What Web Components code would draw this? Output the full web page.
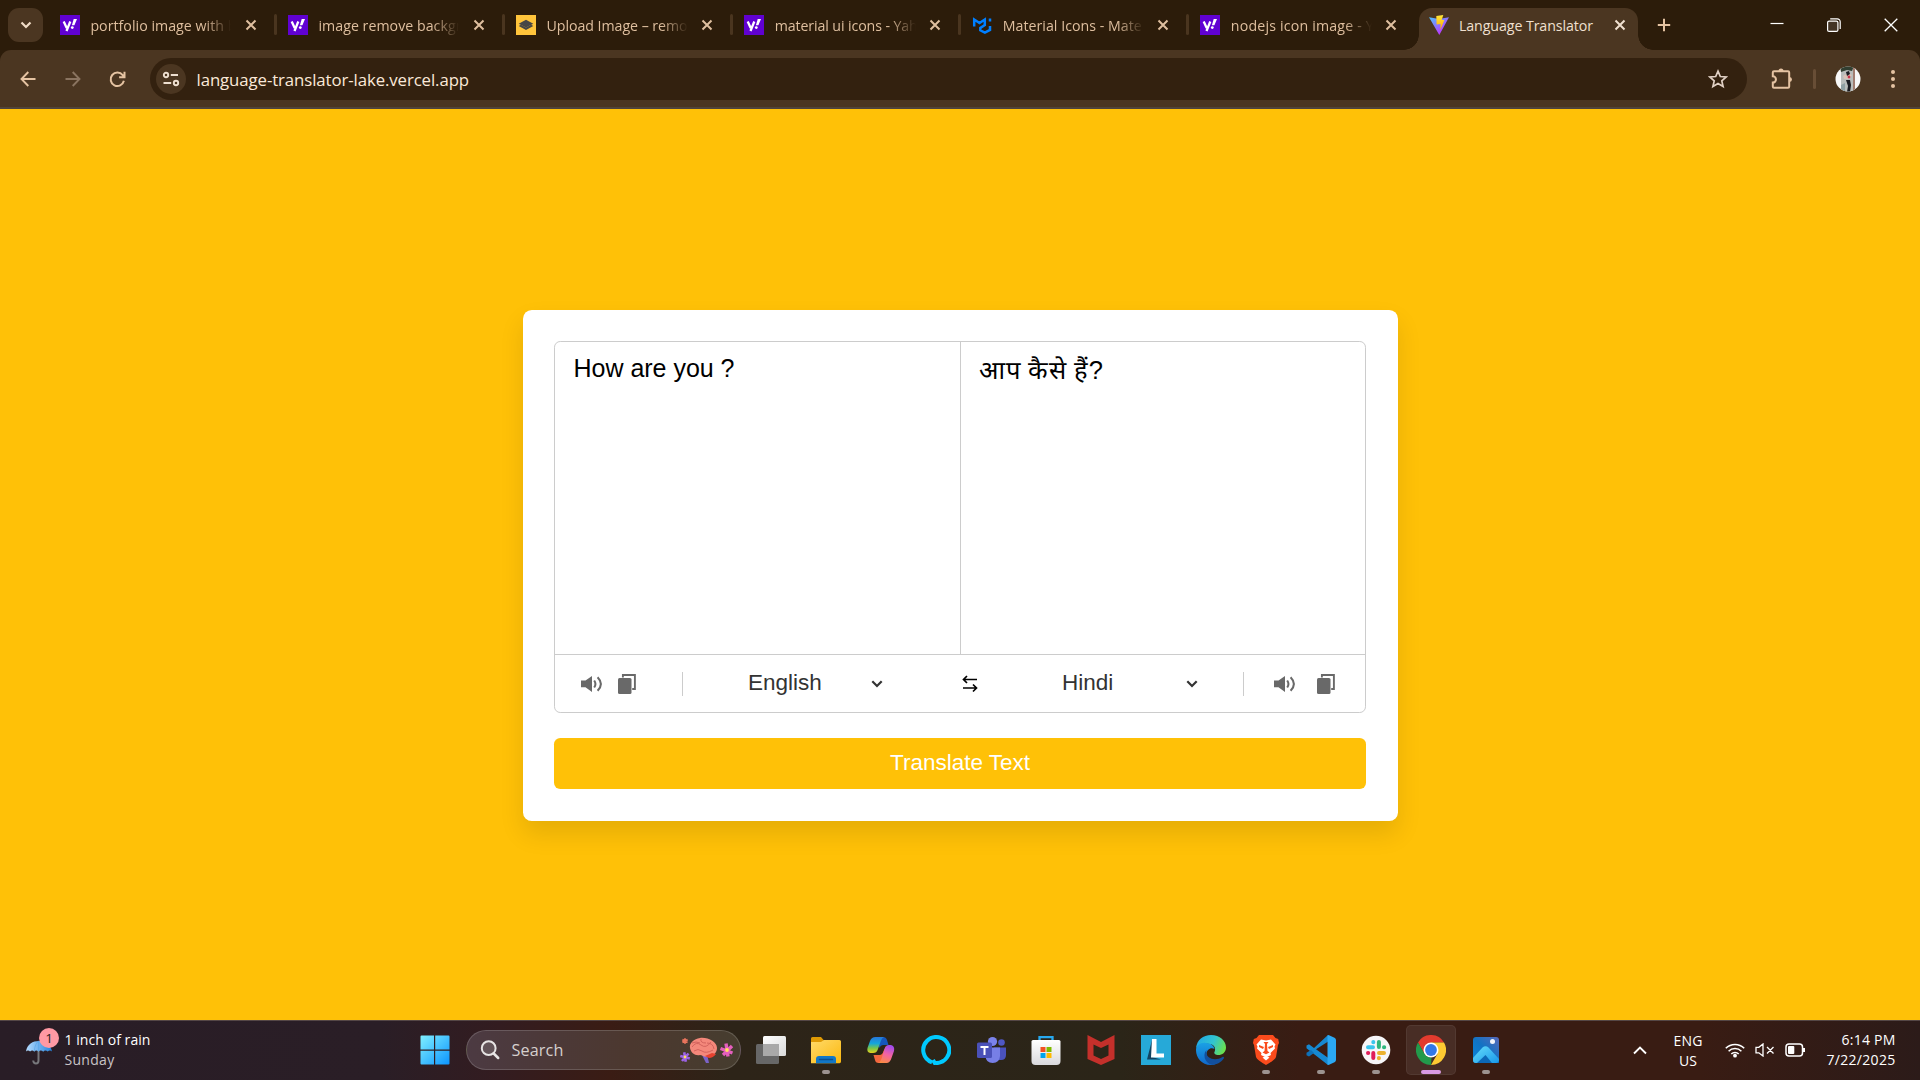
<!DOCTYPE html>
<html lang="en">
<head>
<meta charset="utf-8">
<title>Language Translator</title>
<style>
html,body{margin:0;padding:0;width:1920px;height:1080px;overflow:hidden;background:#ffc107}
body{display:flex;flex-direction:column;font-family:"Open Sans","Noto Sans",sans-serif}
</style>
</head>
<body>
<tab-strip></tab-strip>
<browser-toolbar url="language-translator-lake.vercel.app"></browser-toolbar>
<translator-page></translator-page>
<task-bar></task-bar>
<script>
const ICONS = {
  chevron: [12,8,'<path d="M1.5 1.5 6 6l4.500-4.500" fill="none" stroke="currentColor" stroke-width="2.200"/>'],
  selectChevron: [12,8,'<path d="M1.300 1.300 6 6l4.700-4.700" fill="none" stroke="currentColor" stroke-width="2.200"/>'],
  yahoo: [20,20,'<path fill="#6001d2" d="M0 0h20v20H0z"/><path d="M3.700 6.500 6.700 13M10.300 6.500 6.500 16" fill="none" stroke="#fff" stroke-width="2.300"/><path fill="#fff" d="M13.700 4H17l-2.600 6.300h-2.500z"/><circle cx="12.300" cy="12.600" r="1.400" fill="#fff"/>'],
  layers: [20,20,'<path fill="#ffc43b" d="M0 0h20v20H0z"/><path fill="#464646" d="m10 4.800 7.300 3.900-7.300 3.900-7.300-3.900z"/><path fill="#464646" d="m2.700 10.900 2.200-1.100 5.100 2.800 5.100-2.800 2.200 1.100-7.300 4z"/>'],
  mui: [20,20,'<path d="M2.200 11.500V4.500L7.500 8l5.300-3.500V10L8.300 13v2.300l4.600 2.400 5.100-2.800V11M18 3.500v3" fill="none" stroke="#007fff" stroke-width="2.500"/>'],
  vite: [20,20,'<defs><linearGradient id="v" x1="0" y1="0" x2="12" y2="19" gradientUnits="userSpaceOnUse"><stop stop-color="#41d1ff"/><stop offset="1" stop-color="#bd34fe"/></linearGradient><linearGradient id="b" x1="0" y1="0" x2="0" y2="1"><stop stop-color="#ffe83b"/><stop offset="1" stop-color="#ffa800"/></linearGradient></defs><path fill="url(#v)" d="m0 2.300 10.300 17.700L20 2.300 10 4z"/><path fill="url(#b)" d="M7.300.9 14.300 0l-1.600 5 2.700.1L11.300 15l.3-6-4 .5z"/>'],
  close: [12,12,'<path d="m1.500 1.500 9 9m0-9-9 9" stroke="currentColor" stroke-width="2" fill="none"/>'],
  plus: [14,14,'<path d="M7 .8v12.400M.8 7h12.400" stroke="currentColor" stroke-width="2"/>'],
  minimize: [14,14,'<path d="M.5 5.500h13" stroke="#fff" stroke-width="1.200"/>'],
  restore: [14,14,'<rect x=".6" y="3.100" width="10.300" height="10.300" rx="1.500" fill="#8a8078" fill-opacity=".25" stroke="#fff" stroke-width="1.200"/><path d="M3.200.8h7a3 3 0 0 1 3 3v7.300" fill="none" stroke="#fff" stroke-width="1.200"/>'],
  winClose: [14,14,'<path d="m.7.700 12.600 12.600m0-12.600L.7 13.300" stroke="#fff" stroke-width="1.300"/>'],
  back: [16,16,'<path d="M15.500 8H1.800M8.300 1 1.500 8l6.800 7" fill="none" stroke="currentColor" stroke-width="1.900"/>'],
  forward: [16,16,'<path d="M.5 8h13.700M7.700 1l6.800 7-6.800 7" fill="none" stroke="currentColor" stroke-width="1.900"/>'],
  reload: [17,17,'<path d="M14.900 9.800A6.700 6.700 0 1 1 13.700 4.200l1 1.300M15.500.8v5.400h-5.400" fill="none" stroke="currentColor" stroke-width="2"/>'],
  tune: [18,16,'<g fill="none" stroke="currentColor" stroke-width="1.900"><circle cx="4" cy="4" r="2.200"/><circle cx="14" cy="12" r="2.200"/><path d="M8.800 4H16M1.500 12h7.700"/></g>'],
  star: [20,20,'<path d="m10 2.200 2.300 5.300 5.900.5-4.400 3.900 1.300 5.700-5.100-3-5.100 3 1.300-5.700L1.800 8l5.900-.5z" fill="none" stroke="currentColor" stroke-width="1.700"/>'],
  puzzle: [22,22,'<path d="M3 3.300h14q1.200 0 1.200 1.200v14q0 1.200-1.200 1.200H3q-1.200 0-1.200-1.200v-3.900a2.800 2.800 0 0 0 0-6.300V4.500Q1.800 3.300 3 3.300z" fill="none" stroke="currentColor" stroke-width="2"/><path fill="currentColor" d="M7.500 3a2.500 2.500 0 0 1 5 0zM18.500 9a2.500 2.500 0 0 1 0 5z"/>'],
  dots: [6,20,'<g fill="currentColor"><circle cx="3" cy="3" r="2"/><circle cx="3" cy="10" r="2"/><circle cx="3" cy="17" r="2"/></g>'],
  avatar: [26,26,'<clipPath id="c"><circle cx="13" cy="13" r="12.500"/></clipPath><g clip-path="url(#c)"><path fill="#f8f8f8" d="M0 0h26v26H0z"/><path fill="#b9bdbb" d="M6 3h14v23H6z"/><path fill="#323f31" d="M5 0h14l-2 5-5-1-6 2z"/><path fill="#a27d70" d="M18 2h2v23h-2z"/><path fill="#d8c3b8" d="m8 10 5-3 4 2-3 4-5 0z"/><path fill="#1a1b20" d="m11 6 3-1 1 3-3 2zM11 14h4l1 5-1 7h-3l1-6z"/><circle cx="14" cy="11" r="1.400" fill="#c9354a"/><path fill="#8fa0a3" d="m6 19 4-2v9H6z"/></g>'],
  speaker: [22,18,'<path fill="currentColor" d="M0 5.600h4.500L11 1v16l-6.500-4.800H0z"/><path d="M13.200 5.500q2.500 3.500 0 7M16.600 2.200q6.600 6.800 0 13.600" fill="none" stroke="currentColor" stroke-width="2"/>'],
  copy: [18,20,'<path fill="currentColor" d="M0 5.500Q0 4 1.500 4H12q1.500 0 1.500 1.500v13Q13.500 20 12 20H1.500Q0 20 0 18.500z"/><path d="M4.900 3.500V1h12v14h-2.700" fill="none" stroke="currentColor" stroke-width="1.900"/>'],
  swap: [16,18,'<path d="M15 4.500H1.500M5 1 1.500 4.500 5 8M1 13h13.500M11 9.500l3.500 3.500-3.500 3.500" fill="none" stroke="#000" stroke-width="1.700"/>'],
  umbrella: [28,26,'<defs><linearGradient id="u"><stop stop-color="#b5dcff"/><stop offset="1" stop-color="#2382dc"/></linearGradient></defs><path d="M12.500 8v13.500q0 3-2.500 3t-2.800-3" fill="none" stroke="#77777b" stroke-width="2"/><path fill="url(#u)" d="M0 12.500C1 5 7 2 12.700 2S25 5 26 12.500q-2-2-4.300 0-2.300-2-4.500 0-2.400-2-4.700 0-2.300-2-4.200 0-2.200-2-4.200 0-2.100-2-4.100 0z"/><path d="M8.300 12.500q.5-8 4.400-10.500 4 3 4.500 10.500M12.500 12.500V2" stroke="#5ba6e8" stroke-width=".7" fill="none"/>'],
  start: [30,30,'<defs><linearGradient id="w" x1="0" y1="0" x2="30" y2="30" gradientUnits="userSpaceOnUse"><stop stop-color="#82f1ff"/><stop offset="1" stop-color="#0a93ff"/></linearGradient></defs><path fill="url(#w)" d="M1.500.5H14v14H.5v-13q0-1 1-1zM15.200.5h13.300q1 0 1 1v13H15.200zM.5 15.700H14v13.800H1.500q-1 0-1-1zM15.200 15.700h14.300v12.800q0 1-1 1H15.200z"/>'],
  search: [20,20,'<circle cx="8.700" cy="8.200" r="6.900" fill="#fff2" stroke="#e7e4e4" stroke-width="2"/><path d="m13.700 13.500 4.500 4.500" stroke="#e7e4e4" stroke-width="2.500" stroke-linecap="round"/>'],
  brain: [54,28,'<path fill="#7b63c8" d="m21 17 6 1 2 9h-3z"/><path fill="#f4887b" d="M10 12c-1-5 4-9 10-10 8-1 17 4 17 10 0 5-4 8-8 8-4 2-7-1-9-1-5 1-9-2-10-7z"/><path d="M12 11q4-6 9-2t10-3M14 15q4-3 8 0t11-1M21 3q-1 4 5 4M27 7q6 0 7 6M12 7q4-2 8 0" fill="none" stroke="#cf5f59" stroke-width=".9"/><path fill="#e5412f" d="m25 20 7-3 4 1q-3 4-7 4z"/><g transform="translate(47 14)" stroke="#e45fbd" stroke-width="3.400"><path d="M-1-6.500 1 6.500M-6.500-1.500 5.500 3M-4 5 5-4"/><circle r="1.900" fill="#ffe15b" stroke="none"/></g><g transform="translate(5 21)" stroke="#9d63e8" stroke-width="2.600"><path d="M-.8-4.800.8 4.800M-4.800-1 4.800 1.500M-3 4 3.500-3.500"/><circle r="1.400" fill="#ffe15b" stroke="none"/></g><g transform="translate(5 5)" stroke="#e8745c" stroke-width="1.800"><path d="M0-2.800v5.600M-2.600-1.400 2.600 1.400M-2.600 1.400l5.200-2.800"/></g>'],
  taskview: [32,30,'<defs><linearGradient id="t" x1="0" y1="0" x2="1" y2="1"><stop stop-color="#fff"/><stop offset="1" stop-color="#d9d9d9"/></linearGradient></defs><rect x="1" y="9" width="23" height="20" rx="1.500" fill="#676767"/><rect x="8" y="1" width="23" height="20" rx="1.500" fill="url(#t)"/><path fill="#a9a9a9" d="M8 9h16v12H8z"/>'],
  folder: [30,30,'<defs><linearGradient id="y" x1="0" y1="0" x2="1" y2="1"><stop stop-color="#ffda69"/><stop offset="1" stop-color="#fbb80e"/></linearGradient></defs><path fill="#df9a04" d="M0 3.500Q0 2 1.500 2H10l3 3.500h5V12H0z"/><path fill="url(#y)" d="M0 7h10l3-2h15.500Q30 5 30 6.500v20q0 1.700-1.500 1.700H0z"/><path fill="#1277c6" d="M5 28.300V24q0-3 3-3h14q3 0 3 3v4.300z"/><path d="M8.500 24.500h13" stroke="#0a4f92" stroke-width="1.500" stroke-linecap="round"/>'],
  copilot: [30,30,'<defs><linearGradient id="p1" x1="0" y1="0" x2="0" y2="1"><stop stop-color="#2877d9"/><stop offset=".4" stop-color="#14a5dc"/><stop offset=".7" stop-color="#76c64b"/><stop offset="1" stop-color="#e7d21c"/></linearGradient><linearGradient id="p2" x1=".6" y1="0" x2=".3" y2="1"><stop stop-color="#a24bed"/><stop offset=".5" stop-color="#f263a2"/><stop offset="1" stop-color="#fb8b42"/></linearGradient></defs><path fill="#1557bc" d="M10 2h7q3 0 4 3l1.500 5h-5q-3 0-4 3z"/><path fill="url(#p1)" d="M9.500 2H18q-2.300 1-3.200 4l-3 8.500Q10.700 18 7 18H4.500q-4-.5-3-5l2.500-7Q5.500 2 9.500 2z"/><path fill="#f4673e" d="M7.500 20h6q3 0 4-4l3-6-3 14q-1.500 4-5 4-3 0-3.500-3z"/><path fill="url(#p2)" d="M20.500 28H12q2.500-1 3.400-4l3-9.500Q19.500 10 23 10h2q4 1 3 6l-2.500 7Q24 28 20.500 28z"/>'],
  alexa: [30,30,'<path d="M14.500 28A13 13 0 1 0 11 27.300M12 25l2.700 4.500" fill="none" stroke="#00caff" stroke-width="4"/><path fill="#00caff" d="M14.500 30v-2.500q4-1.500 7-3.500l1.500 2.500q-4 3.300-8.500 3.500z"/>'],
  teams: [30,30,'<circle cx="25.500" cy="7.500" r="3.300" fill="#4f58c4"/><path fill="#4a52bd" d="M18 12.500h12V20q0 5-5 5h-5z"/><circle cx="16.500" cy="6.500" r="4.600" fill="#7b83eb"/><path fill="#777fe6" d="M10 12.500h14V21q-.5 7-7.300 7T9.500 21z"/><rect x="1" y="7.500" width="15" height="15.500" rx="1.500" fill="#4a51b8"/><path fill="#fff" d="M4.500 11h8v1.900h-3v7H7.500v-7h-3z"/>'],
  store: [30,30,'<defs><linearGradient id="s" x1="0" y1="0" x2="0" y2="1"><stop stop-color="#fff"/><stop offset="1" stop-color="#d9d9dc"/></linearGradient></defs><path d="M8.500 7V2.200h13V7" fill="none" stroke="#27a9ef" stroke-width="2.300"/><path fill="url(#s)" d="M.5 6.500Q.5 5 2 5h26q1.500 0 1.500 1.500V26q0 4-4 4h-21q-4 0-4-4z"/><path fill="#f25022" d="M9.500 12h5v5h-5z"/><path fill="#7fba00" d="M15.500 12h5v5h-5z"/><path fill="#00a4ef" d="M9.500 18h5v5h-5z"/><path fill="#ffb900" d="M15.500 18h5v5h-5z"/>'],
  mcafee: [30,30,'<path fill="#c4302b" d="m1.500 0 13.500 7L28.500 0v24L15 30 1.500 24zM7.500 9.500v11L15 24l7.500-3.500v-11L15 13z" fill-rule="evenodd"/>'],
  lenovo: [30,30,'<path fill="#26a9d8" d="M0 0h30v30H0z"/><path fill="#124361" d="M11 5 6 24.500h14L11 22z"/><path fill="#fff" d="M11 4h4.500v14.500H23V22.500H10z"/>'],
  edge: [30,30,'<defs><linearGradient id="e1" x1="0" y1=".3" x2="1" y2=".6"><stop stop-color="#20a9e5"/><stop offset=".55" stop-color="#32c4cf"/><stop offset="1" stop-color="#6be14b"/></linearGradient><linearGradient id="e2" x1="0" y1="0" x2="0" y2="1"><stop stop-color="#1aa1e5"/><stop offset="1" stop-color="#1068cb"/></linearGradient></defs><path fill="url(#e1)" d="M0 13C1 5 7 0 15 0c9 0 15 6 15 12.500 0 5-4 7.500-7.500 7.500-3 0-5-1.500-4-3 2-4-1-8-5-8C8 8 3 9 0 13z"/><path fill="url(#e2)" d="M0 15C0 10 5 7 10 8c5 0 8 3 8.500 6-4-2-8 1-8 5 1 7 8 10 14 6-2 3-6 5-10 5C6 30 0 23 0 15z"/><path fill="#124f9d" d="M10.500 15c-2 8 8 12 16 7 1-.5 2 .2 1.200 1.500C24 29 17 31 13.500 29 8 26 7 19 10.500 15z"/>'],
  brave: [30,30,'<path fill="#fb4b1c" d="m8 0h14l2.500 3 2.700 1 .8 4-1 2-2 12q-1 3-10 8-9-5-10-8L3 10 2 8l.8-4 2.700-1z"/><path fill="#fff" d="m15 5.500 5-1 4.500 5-1 2 .5 2-4.500 4.500.5 2-5 2.500-5-2.500.5-2L6 13.500l.5-2-1-2 4.500-5z"/><path fill="#fb4b1c" d="m8 10 5 2-1 2-4-2zM22 10l-5 2 1 2 4-2zM12.500 7h5L16 9l.5 7 2 1.500-3.500 1.700-3.500-1.700 2-1.500.5-7z"/><path fill="#fff" d="m11.500 22.500 3.500-1.300 3.500 1.300-3.500 3z"/>'],
  vscode: [30,30,'<path fill="#1688d1" d="M22 0 8 13 3 9.300.5 10.600v2.600L22 30l1-6.500-13-9.300L23 6z"/><path fill="#0e70b8" d="M.5 17.700v2.600L3 21.500 8 18l-3-3z"/><path fill="#2ba8f3" d="m22.500 0 6 2.700Q30 3.500 30 5v20q0 1.500-1.500 2.300l-6 2.700q-1 0-1-1V1q0-1 1-1z"/>'],
  slack: [30,30,'<circle cx="15" cy="15" r="14.300" fill="#f7f6f8"/><g stroke-width="4" stroke-linecap="round" fill="none"><path stroke="#3ac5ee" d="M7 12.300H12M12.300 7v.2"/><path stroke="#2fb67d" d="M17.900 7v5M23 12.300h.2"/><path stroke="#e01e5a" d="M12.300 18v5M7 17.900h.2"/><path stroke="#ecb22e" d="M18 17.900h5M17.900 23v.2"/></g>'],
  chrome: [30,30,'<path fill="#e33b2e" d="M2 7.500a15 15 0 0 1 26 0H15L8.500 18.800z"/><path fill="#fdca32" d="M28 7.500A15 15 0 0 1 15 30l6.500-11.200L15 7.500z"/><path fill="#229a4b" d="M15 30A15 15 0 0 1 2 7.500l6.500 11.300q3 4 7 4z"/><circle cx="15" cy="15" r="7.500" fill="#fff"/><circle cx="15" cy="15" r="5.900" fill="#3278e8"/>'],
  photos: [30,30,'<defs><linearGradient id="h" x1="0" y1="1" x2="1" y2="0"><stop stop-color="#0986db"/><stop offset=".5" stop-color="#1173c4"/><stop offset="1" stop-color="#5968b8"/></linearGradient><linearGradient id="i" x1="0" y1="0" x2="1" y2="1"><stop stop-color="#65ddfb"/><stop offset="1" stop-color="#1897e9"/></linearGradient></defs><rect x="2" y="2" width="26" height="26" rx="3" fill="url(#h)"/><path fill="#0c68b7" d="m14 14 14 13v1H5z"/><path fill="url(#i)" d="M2 23 11.500 12.500q3-2.500 6 0L28 24v1q0 3-3 3H21l-6.500-8L6 28H5q-3 0-3-3z"/><circle cx="21.500" cy="6.500" r="2.500" fill="#f1f4fa"/>'],
  up: [14,9,'<path d="m1 7.500 6-6 6 6" fill="none" stroke="#fff" stroke-width="1.900"/>'],
  wifi: [20,16,'<g fill="none" stroke="#fff" stroke-width="1.600"><path d="M.8 6.300a13 13 0 0 1 18.400 0"/><path d="M3.600 9.200a9 9 0 0 1 12.800 0"/><path d="M6.300 12a5.200 5.200 0 0 1 7.400 0"/></g><circle cx="10" cy="13.700" r="1.900" fill="#fff"/>'],
  mute: [20,14,'<path d="M1 4.300h2.800L8 1v12L3.800 9.800H1zM12 4l6.500 6.500M18.500 4 12 10.500" fill="none" stroke="#fff" stroke-width="1.300"/>'],
  battery: [21,14,'<rect x="1" y="1" width="16.500" height="12" rx="3" fill="none" stroke="#fff" stroke-width="1.500"/><rect x="3" y="3" width="6.300" height="8" rx="1" fill="#fff"/><path d="M19 5v4" stroke="#fff" stroke-width="2"/>']
};

class SvgIcon extends HTMLElement {
  connectedCallback() {
    if (this.shadowRoot) return;
    const [w, h, body] = ICONS[this.getAttribute('name')];
    this.attachShadow({mode:'open'}).innerHTML =
      `<style>:host{display:block;flex:none;width:${w}px;height:${h}px}svg{display:block}</style>
       <svg width="${w}" height="${h}" viewBox="0 0 ${w} ${h}">${body}</svg>`;
  }
}

/* One line of text whose tracking is adjusted so that it spans the width in "w". */
class FitText extends HTMLElement {
  connectedCallback() {
    if (this.shadowRoot) return;
    this.attachShadow({mode:'open'}).innerHTML =
      '<style>:host{display:block;width:max-content;white-space:pre;flex:none}</style><slot></slot>';
    const n = this.textContent.length, w = parseFloat(this.getAttribute('w'));
    if (w) this.style.letterSpacing = ((w - this.getBoundingClientRect().width) / n) + 'px';
  }
}

class ChromeTab extends HTMLElement {
  connectedCallback() {
    const active = this.hasAttribute('active');
    this.attachShadow({mode:'open'}).innerHTML = `
      <style>
      :host{display:flex;position:relative;width:228.100px;height:50px;flex:none;box-sizing:border-box;padding-left:13px;align-items:center;color:#dfbf9f}
      :host([active]){color:#f0e0d0}
      :host([line])::after{content:"";position:absolute;right:-1.500px;top:14px;width:3px;height:21px;border-radius:2px;background:#4a351f}
      .body{position:absolute;left:3.400px;top:7.500px;width:219px;bottom:0;background:#4b3621;border-radius:13px 13px 0 0}
      .body::before,.body::after{content:"";position:absolute;bottom:0;width:15px;height:15px}
      .body::before{right:100%;background:radial-gradient(circle at 0 0,#0000 14.500px,#4b3621 15px)}
      .body::after{left:100%;background:radial-gradient(circle at 100% 0,#0000 14.500px,#4b3621 15px)}
      svg-icon{position:relative}
      .title{position:relative;margin-left:10.400px;width:149px;font-size:14.200px;line-height:24px;padding-top:1px}
      :host(:not([active])) .title{-webkit-mask:linear-gradient(90deg,#000 114px,#0000 141px);mask:linear-gradient(90deg,#000 114px,#0000 141px)}
      .x{margin-left:5.600px}
      </style>
      ${active ? '<div class="body"></div>' : ''}
      <svg-icon name="${this.getAttribute('icon')}"></svg-icon>
      <div class="title"><fit-text w="${this.getAttribute('w')}">${this.textContent}</fit-text></div>
      <svg-icon class="x" name="close"></svg-icon>`;
  }
}

class TabStrip extends HTMLElement {
  connectedCallback() {
    this.attachShadow({mode:'open'}).innerHTML = `
      <style>
      :host{display:flex;height:50px;flex:none;background:#2c1c0a;align-items:center}
      .menu{width:35px;height:34px;margin:0 4px 0 8px;border-radius:11px;background:#4b3621;display:flex;align-items:center;justify-content:center;color:#f0dcc6}
      .plus{margin-left:13.400px;color:#e5c3a2}
      .win{margin-left:auto;margin-right:22px;display:flex;gap:43px}
      </style>
      <div class="menu"><svg-icon name="chevron"></svg-icon></div>
      <chrome-tab icon="yahoo" w="146" line>portfolio image with b</chrome-tab>
      <chrome-tab icon="yahoo" w="143" line>image remove backgr</chrome-tab>
      <chrome-tab icon="layers" w="141" line>Upload Image – remo</chrome-tab>
      <chrome-tab icon="yahoo" w="143" line>material ui icons - Yah</chrome-tab>
      <chrome-tab icon="mui" w="139" line>Material Icons - Mate</chrome-tab>
      <chrome-tab icon="yahoo" w="143">nodejs icon image - Y</chrome-tab>
      <chrome-tab icon="vite" w="134" active>Language Translator</chrome-tab>
      <svg-icon class="plus" name="plus"></svg-icon>
      <div class="win"><svg-icon name="minimize"></svg-icon><svg-icon name="restore"></svg-icon><svg-icon name="winClose"></svg-icon></div>`;
  }
}

class BrowserToolbar extends HTMLElement {
  connectedCallback() {
    this.attachShadow({mode:'open'}).innerHTML = `
      <style>
      :host{display:block;height:59px;flex:none;background:#2c1c0a}
      .bar{box-sizing:border-box;height:59px;background:#4b3621;border-radius:11px 11px 0 0;border-bottom:2px solid #50443b;padding:8px 24.500px 7px 20px;display:flex;align-items:center;color:#e5c3a2}
      .fwd{margin-left:29px;color:#8a7460}.rel{margin-left:28px}
      .box{margin-left:24px;width:1597px;height:42px;border-radius:21px;background:#33210f;display:flex;align-items:center;box-sizing:border-box;padding:0 19px 0 6px;flex:none;color:#eedfd0}
      .site{width:30px;height:30px;border-radius:50%;background:#4b3621;display:flex;align-items:center;justify-content:center}
      .url{margin-left:10.500px;font-size:16.800px;line-height:24px;padding-top:1px;color:#fbe9d9}
      .star{margin-left:auto;color:#e0d0c4}
      .puz{margin-left:24px}
      .sep{width:3px;height:20px;margin-left:20px;border-radius:2px;background:#684e36}
      .av{margin-left:18.500px}.dots{margin-left:auto}
      </style>
      <div class="bar">
        <svg-icon name="back"></svg-icon><svg-icon class="fwd" name="forward"></svg-icon><svg-icon class="rel" name="reload"></svg-icon>
        <div class="box"><div class="site"><svg-icon name="tune"></svg-icon></div>
          <fit-text class="url" w="272.500">${this.getAttribute('url')}</fit-text><svg-icon class="star" name="star"></svg-icon></div>
        <svg-icon class="puz" name="puzzle"></svg-icon><div class="sep"></div><svg-icon class="av" name="avatar"></svg-icon><svg-icon class="dots" name="dots"></svg-icon>
      </div>`;
  }
}

class LanguageSelect extends HTMLElement {
  connectedCallback() {
    this.attachShadow({mode:'open'}).innerHTML = `
      <style>:host{display:flex;align-items:center;justify-content:space-between;color:#333;font-size:22.500px;line-height:28px;padding-bottom:2px}svg-icon{margin-top:3px}</style>
      <slot></slot><svg-icon name="selectChevron"></svg-icon>`;
  }
}

class TranslatorPage extends HTMLElement {
  connectedCallback() {
    this.attachShadow({mode:'open'}).innerHTML = `
      <style>
      :host{display:flex;flex:1;box-sizing:border-box;padding:201px 0 0 523px;background:#ffc107;font-family:"Liberation Sans",Arial,sans-serif;align-items:flex-start;overflow:hidden}
      .card{width:875px;height:511px;box-sizing:border-box;background:#fff;border-radius:8.750px;padding:31px 32px 32px 31px;box-shadow:0 12.500px 25px rgba(0,0,0,.1)}
      .box{box-sizing:border-box;height:372px;border:1px solid #ccc;border-radius:6.250px;display:flex;flex-direction:column}
      .areas{display:flex;height:312px;border-bottom:1px solid #ccc}
      .area{flex:1;padding:12px 18.500px;font-size:25px;line-height:29px;color:#000}
      .area+.area{border-left:1px solid #ccc;padding-top:14px}
      .area+.area fit-text{font-size:25.500px}
      .controls{display:flex;flex:1;align-items:center;color:#696969}
      .controls>*{flex:none}
      .rule{width:1px;height:24px;background:#ccc;margin-top:1px}
      svg-icon{margin-top:1px}
      .btn{box-sizing:border-box;height:51px;margin-top:25px;border-radius:6.250px;background:#ffc107;color:#fff;display:flex;align-items:center;justify-content:center;font-size:22.500px;line-height:28px;padding-bottom:2px}
      </style>
      <div class="card">
        <div class="box">
          <div class="areas"><div class="area"><fit-text w="161">How are you ?</fit-text></div><div class="area"><fit-text w="127" lang="hi">आप कैसे हैं?</fit-text></div></div>
          <div class="controls">
            <svg-icon name="speaker" style="margin-left:26px"></svg-icon>
            <svg-icon name="copy" style="margin-left:15px"></svg-icon>
            <div class="rule" style="margin-left:46px"></div>
            <language-select style="margin-left:65px;width:135px">English</language-select>
            <svg-icon name="swap" style="margin-left:79px"></svg-icon>
            <language-select style="margin-left:84px;width:136px">Hindi</language-select>
            <div class="rule" style="margin-left:45px"></div>
            <svg-icon name="speaker" style="margin-left:30px"></svg-icon>
            <svg-icon name="copy" style="margin-left:21px"></svg-icon>
          </div>
        </div>
        <div class="btn"><fit-text w="140">Translate Text</fit-text></div>
      </div>`;
  }
}

class TaskApp extends HTMLElement {
  connectedCallback() {
    this.attachShadow({mode:'open'}).innerHTML = `
      <style>
      :host{display:flex;position:relative;width:55px;height:50px;align-items:center;justify-content:center;flex:none}
      svg-icon{position:relative}
      :host([running])::after{content:"";position:absolute;left:23.500px;top:45px;width:8px;height:4px;border-radius:2px;background:#9c9390}
      :host([current])::before{content:"";position:absolute;left:2.500px;top:0;width:50px;height:50px;box-sizing:border-box;border-radius:5px;background:rgba(255,255,255,.08);border:1px solid rgba(255,255,255,.06)}
      :host([current])::after{left:17.500px;width:20px;background:#d99ae2}
      </style><svg-icon name="${this.getAttribute('icon')}"></svg-icon>`;
  }
}

class TaskBar extends HTMLElement {
  connectedCallback() {
    const apps = ['taskview','folder*','copilot','alexa','teams','store','mcafee','lenovo','edge','brave*','vscode*','slack*','chrome!','photos*'];
    this.attachShadow({mode:'open'}).innerHTML = `
      <style>
      :host{display:flex;box-sizing:border-box;height:60px;flex:none;align-items:center;border-top:1px solid #554746;padding-bottom:1px;color:#fff;font-size:14px;line-height:20px;
        background:linear-gradient(90deg,#291d26 0,#2a1e26 380px,#331c20 500px,#3a1c14 610px,#2d2418 730px,#2b2518 1120px,#391c13 1300px,#391c13 1700px,#2c1b19 1920px)}
      .weather{position:relative;margin-left:26px;width:38.500px;padding-top:3px}
      .badge{position:absolute;left:13px;top:-8px;width:20px;height:20px;border-radius:50%;background:#ff99a4;color:#2a1d20;text-align:center;font-size:13.500px;line-height:20px}
      .sun{color:#c9c4c7}
      .lines{width:355.500px;padding-bottom:1px}
      .search{margin-left:15.500px;width:275px;height:40px;box-sizing:border-box;border-radius:20px;border:1px solid rgba(255,255,255,.16);background:linear-gradient(90deg,#4c3a42,#4c382f 60%,#463d2f);display:flex;align-items:center;padding:0 6px 0 13.500px;color:#d6d0ce;font-size:16.200px;flex:none}
      .search fit-text{margin-left:11.500px}
      .search .brain{margin-left:auto}
      .apps{display:flex;margin-left:2.500px}
      .up{margin-left:120px}
      .lang{width:62px;margin-left:10px;padding-top:1px;display:flex;flex-direction:column;align-items:center}
      .tray{display:flex;align-items:center;gap:10px;margin-left:6px}
      .clock{margin-left:auto;margin-right:24.500px;padding-bottom:1px;display:flex;flex-direction:column;align-items:flex-end}
      </style>
      <div class="weather"><svg-icon name="umbrella"></svg-icon><div class="badge">1</div></div>
      <div class="lines"><fit-text w="86">1 inch of rain</fit-text><fit-text class="sun" w="50">Sunday</fit-text></div>
      <svg-icon name="start"></svg-icon>
      <div class="search"><svg-icon name="search"></svg-icon><fit-text w="52">Search</fit-text><svg-icon class="brain" name="brain"></svg-icon></div>
      <div class="apps">${apps.map(a => `<task-app icon="${a.replace(/[*!]/,'')}" ${/[*!]/.test(a)?'running':''} ${a.endsWith('!')?'current':''}></task-app>`).join('')}</div>
      <svg-icon class="up" name="up"></svg-icon>
      <div class="lang"><fit-text w="29">ENG</fit-text><fit-text w="18">US</fit-text></div>
      <div class="tray"><svg-icon name="wifi"></svg-icon><svg-icon name="mute"></svg-icon><svg-icon name="battery"></svg-icon></div>
      <div class="clock"><fit-text w="54">6:14 PM</fit-text><fit-text w="69">7/22/2025</fit-text></div>`;
  }
}

customElements.define('svg-icon', SvgIcon);
customElements.define('chrome-tab', ChromeTab);
customElements.define('tab-strip', TabStrip);
customElements.define('browser-toolbar', BrowserToolbar);
customElements.define('language-select', LanguageSelect);
customElements.define('translator-page', TranslatorPage);
customElements.define('task-app', TaskApp);
customElements.define('task-bar', TaskBar);
customElements.define('fit-text', FitText);
</script>
</body>
</html>
